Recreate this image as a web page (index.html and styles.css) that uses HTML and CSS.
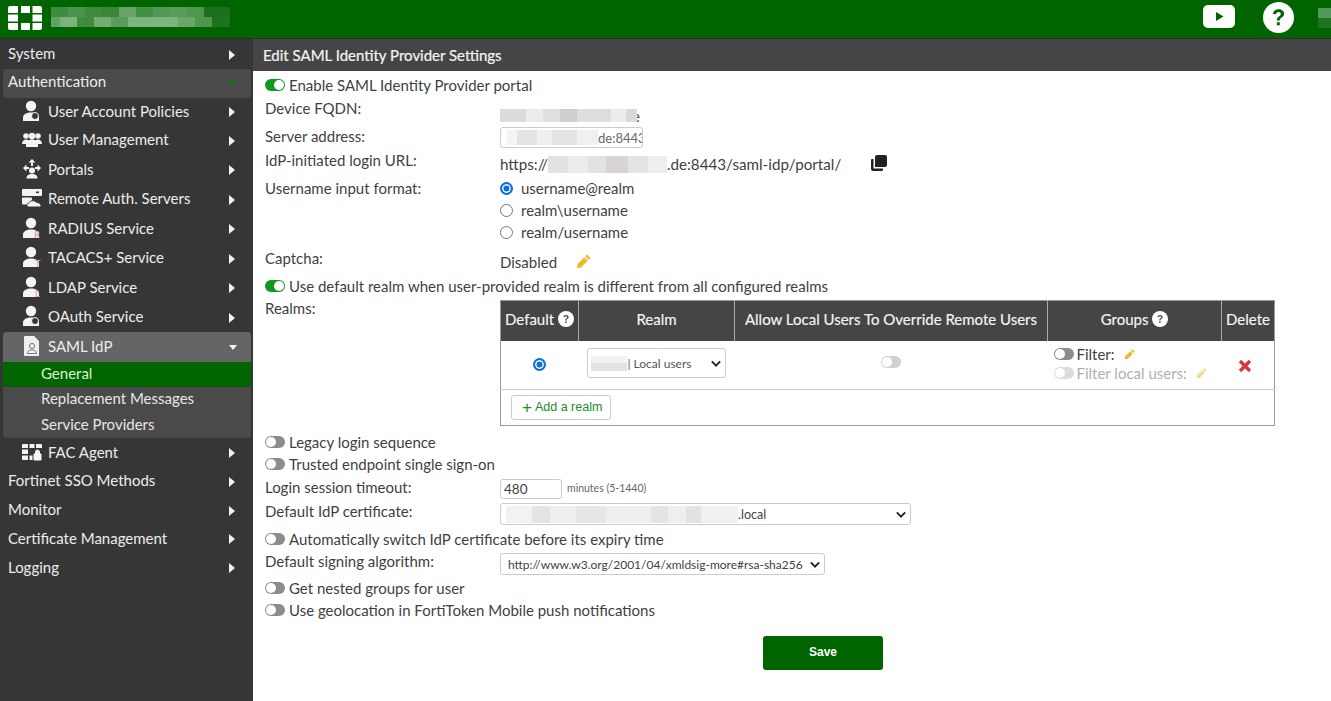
FILE: index.html
```html
<!DOCTYPE html>
<html lang="en">
<head>
<meta charset="utf-8">
<title>Edit SAML Identity Provider Settings</title>
<link rel="stylesheet" href="styles.css">
</head>
<body>
<svg class="defs" width="0" height="0">
  <defs>
    <symbol id="person" viewBox="0 0 20 22">
      <circle cx="9" cy="6" r="5.2" fill="#f4f4f4"/>
      <path d="M1 21v-3.5C1 14 5 12.500 9 12.500s8 1.500 8 5V21z" fill="#f4f4f4"/>
    </symbol>
    <symbol id="chev" viewBox="0 0 6 10"><path d="M0 0l6 5-6 5z" fill="#f2f2f2"/></symbol>
    <symbol id="pencil" viewBox="0 0 16 16"><path d="M11 1.500l3.500 3.500-1.800 1.800-3.500-3.500zM8.300 4.200l3.500 3.500-6.800 6.800-4 .6.600-4z" fill="currentColor"/></symbol>
    <symbol id="help" viewBox="0 0 16 16"><circle cx="8" cy="8" r="8" fill="#fff"/><path d="M5.500 6.200C5.600 4.700 6.700 4 8 4c1.500 0 2.600.8 2.600 2.100 0 1-.6 1.500-1.300 2-.6.400-.8.700-.8 1.300H7.200c0-1 .3-1.500 1-2 .6-.4.900-.7.900-1.200 0-.5-.5-.9-1.100-.9-.7 0-1.100.4-1.200 1z" fill="#454545"/><rect x="7.100" y="10.400" width="1.500" height="1.500" fill="#454545"/></symbol>
  </defs>
</svg>

<header class="topbar">
  <svg class="logo" viewBox="0 0 34 24" width="34" height="24">
    <path fill="#fff" d="M2 0h8v7H0V2a2 2 0 0 1 2-2zM13 0h9v7h-9zM24.500 0H32a2 2 0 0 1 2 2v5h-9.500zM0 8.500h10v7H0zM24.500 8.500H34v7h-9.500zM0 17h10v7H2a2 2 0 0 1-2-2zM13 17h9v7h-9zM24.500 17H34v5a2 2 0 0 1-2 2h-7.500z"/>
  </svg>
  <svg class="mosaic-top" width="179" height="20" viewBox="0 0 179 20">
    <rect width="179" height="20" fill="#2a7a2a"/>
    <rect x="0" y="0" width="17" height="10" fill="#3e8a3e"/><rect x="17" y="0" width="17" height="10" fill="#4c944c"/><rect x="34" y="0" width="17" height="10" fill="#3d893d"/><rect x="51" y="0" width="17" height="10" fill="#3a873a"/><rect x="68" y="0" width="17" height="10" fill="#68a468"/><rect x="85" y="0" width="17" height="10" fill="#409040"/><rect x="102" y="0" width="17" height="10" fill="#52985a"/><rect x="119" y="0" width="17" height="10" fill="#589c58"/><rect x="136" y="0" width="17" height="10" fill="#4f964f"/><rect x="153" y="0" width="26" height="10" fill="#1c6f1c"/>
    <rect x="0" y="10" width="9" height="10" fill="#64a264"/><rect x="9" y="10" width="17" height="10" fill="#7cb27c"/><rect x="26" y="10" width="17" height="10" fill="#3f8c3f"/><rect x="43" y="10" width="17" height="10" fill="#74ac74"/><rect x="60" y="10" width="17" height="10" fill="#5a9c5a"/><rect x="77" y="10" width="50" height="10" fill="#7eb47e"/><rect x="127" y="10" width="17" height="10" fill="#6aa56a"/><rect x="144" y="10" width="17" height="10" fill="#4e964e"/><rect x="161" y="10" width="18" height="10" fill="#1f721f"/>
  </svg>
  <div class="topbar-right">
    <svg class="yt" viewBox="0 0 32 23" width="32" height="23"><rect width="32" height="23" rx="5" fill="#fff"/><path d="M13 7l7.500 4.500L13 16z" fill="#006400"/></svg>
    <svg class="help-top" viewBox="0 0 31 31" width="31" height="31"><circle cx="15.500" cy="15.500" r="15.500" fill="#fff"/><path d="M10 12c.2-3.200 2.500-4.700 5.600-4.700 3.200 0 5.500 1.700 5.500 4.500 0 2-1.200 3-2.700 4-1.200.8-1.600 1.400-1.600 2.600h-3c0-2 .7-3 2.100-4 1.200-.8 1.900-1.400 1.900-2.500 0-1.100-.9-1.900-2.200-1.900-1.400 0-2.300.8-2.500 2.200z" fill="#006400"/><rect x="13.800" y="20.300" width="3" height="3" fill="#006400"/></svg>
    <div class="mosaic-user"></div>
  </div>
</header>

<div class="main">
  <nav class="sidebar">
    <a class="nav top h29">System<svg class="arrow"><use href="#chev"/></svg></a>
    <a class="nav top open h28">Authentication<span class="down green"></span></a>

    <a class="nav sub h29">
      <svg class="ic"><use href="#person"/><circle cx="13" cy="16" r="3.500" fill="#363636" stroke="#f4f4f4"/></svg>User Account Policies<svg class="arrow"><use href="#chev"/></svg></a>
    <a class="nav sub h28">
      <svg class="ic" viewBox="0 0 20 22"><circle cx="4" cy="8" r="2.800" fill="#f4f4f4"/><circle cx="16" cy="8" r="2.800" fill="#f4f4f4"/><circle cx="10" cy="8" r="3.200" fill="#f4f4f4"/><path d="M0 16c0-3 2-4.500 4-4.500s3 .8 3 2V16zM13 16v-2.500c0-1.200 1-2 3-2s4 1.500 4 4.500z" fill="#f4f4f4"/><path d="M4 19v-3c0-3 3-4.500 6-4.500s6 1.500 6 4.500v3z" fill="#f4f4f4"/></svg>User Management<svg class="arrow"><use href="#chev"/></svg></a>
    <a class="nav sub h30">
      <svg class="ic" viewBox="0 0 20 22"><path d="M10 1l3.500 3.500H11V8H9V4.500H6.500zM1 10l3.500-3.500V9H7v2H4.500v2.500zM19 10l-3.500-3.500V9H13v2h2.500v2.500z" fill="#f4f4f4"/><circle cx="10" cy="12.500" r="3" fill="#f4f4f4"/><path d="M4.500 20.500c0-3.500 2.500-4.500 5.500-4.500s5.500 1 5.500 4.500z" fill="#f4f4f4"/></svg>Portals<svg class="arrow"><use href="#chev"/></svg></a>
    <a class="nav sub h29">
      <svg class="ic wide" viewBox="0 0 21 22"><rect x="0" y="2" width="20" height="7" rx="1" fill="#f4f4f4"/><rect x="0" y="10.500" width="10" height="7" rx="1" fill="#f4f4f4"/><rect x="14" y="4.500" width="3" height="1.600" fill="#363636"/><path d="M7 20c-2.500 0-3-3 -.5-3.500C7.500 13.500 12 12.500 14.500 15.500c3.500-.5 6.500 4.500 3 4.500z" fill="#f4f4f4" stroke="#363636"/></svg>Remote Auth. Servers<svg class="arrow"><use href="#chev"/></svg></a>
    <a class="nav sub h30">
      <svg class="ic"><use href="#person"/><text x="12" y="21" class="ic-letter">R</text></svg>RADIUS Service<svg class="arrow"><use href="#chev"/></svg></a>
    <a class="nav sub h29">
      <svg class="ic"><use href="#person"/><text x="13" y="21" class="ic-letter">T</text></svg>TACACS+ Service<svg class="arrow"><use href="#chev"/></svg></a>
    <a class="nav sub h30">
      <svg class="ic"><use href="#person"/><text x="13" y="21" class="ic-letter">L</text></svg>LDAP Service<svg class="arrow"><use href="#chev"/></svg></a>
    <a class="nav sub h29">
      <svg class="ic"><use href="#person"/><circle cx="13" cy="16" r="3.500" fill="#363636" stroke="#f4f4f4"/></svg>OAuth Service<svg class="arrow"><use href="#chev"/></svg></a>

    <div class="group">
      <a class="nav sub group-head">
        <svg class="ic" viewBox="0 0 20 22"><path d="M3 1h9l5 5v15H3a1 1 0 0 1-1-1V2a1 1 0 0 1 1-1z" fill="#f0f0f0"/><circle cx="10" cy="11" r="2.600" fill="none" stroke="#777"/><path d="M5.500 18.500c0-2.500 1.800-3.500 4.500-3.500s4.500 1 4.500 3.500z" fill="none" stroke="#777"/></svg>SAML IdP<span class="down"></span></a>
      <a class="leaf active">General</a>
      <a class="leaf">Replacement Messages</a>
      <a class="leaf">Service Providers</a>
    </div>

    <a class="nav sub h28 fac">
      <svg class="ic wide" viewBox="0 0 21 22"><path d="M1 3h5v4H0V4a1 1 0 0 1 1-1zM7.500 3h5v4h-5zM14 3h5a1 1 0 0 1 1 1v3h-6zM0 8.500h6v4.500H0zM0 14.500h6V19H1a1 1 0 0 1-1-1zM7.500 14.500h3V19h-3z" fill="#f4f4f4"/><path d="M12 13h7v6h-7zM13.500 13v-2a2 2 0 0 1 4 0v2" fill="#f4f4f4" stroke="#f4f4f4"/></svg>FAC Agent<svg class="arrow"><use href="#chev"/></svg></a>
    <a class="nav top h28">Fortinet SSO Methods<svg class="arrow"><use href="#chev"/></svg></a>
    <a class="nav top h29">Monitor<svg class="arrow"><use href="#chev"/></svg></a>
    <a class="nav top h28">Certificate Management<svg class="arrow"><use href="#chev"/></svg></a>
    <a class="nav top h29">Logging<svg class="arrow"><use href="#chev"/></svg></a>
  </nav>

  <main class="content">
    <h1 class="title">Edit SAML Identity Provider Settings</h1>
    <div class="form">
      <div class="toggle-row r-enable"><span class="tg on"></span>Enable SAML Identity Provider portal</div>

      <div class="row r-fqdn"><label>Device FQDN:</label>
        <div class="val v-fqdn"><span class="blur b-fqdn"></span><span class="tail-e">e</span></div></div>
      <div class="row r-server"><label>Server address:</label>
        <div class="input in-server"><span class="blur b-server"></span><span>de:8443</span></div></div>
      <div class="row r-url"><label>IdP-initiated login URL:</label>
        <div class="val v-url">https://<span class="blur b-url"></span>.de:8443/saml-idp/portal/
          <svg class="copy" viewBox="0 0 16 16" width="16" height="16"><path d="M6 0h8a2 2 0 0 1 2 2v8a2 2 0 0 1-2 2H4V2a2 2 0 0 1 2-2z" fill="#222"/><path d="M2.500 4v9.500H12V15a1 1 0 0 1-1 1H2a2 2 0 0 1-2-2V5a1 1 0 0 1 1-1z" fill="#222"/></svg>
        </div></div>
      <div class="row r-format"><label>Username input format:</label>
        <div class="radios">
          <div class="radio-line"><span class="radio checked"></span>username@realm</div>
          <div class="radio-line"><span class="radio"></span>realm\username</div>
          <div class="radio-line"><span class="radio"></span>realm/username</div>
        </div></div>
      <div class="row r-captcha"><label>Captcha:</label>
        <div class="val v-cap">Disabled<svg class="pen big"><use href="#pencil"/></svg></div></div>
      <div class="toggle-row r-default"><span class="tg on"></span>Use default realm when user-provided realm is different from all configured realms</div>

      <div class="row r-realms"><label>Realms:</label>
        <table class="realms">
          <thead><tr>
            <th class="c1">Default <svg class="q"><use href="#help"/></svg></th>
            <th class="c2">Realm</th>
            <th class="c3">Allow Local Users To Override Remote Users</th>
            <th class="c4">Groups <svg class="q"><use href="#help"/></svg></th>
            <th class="c5">Delete</th>
          </tr></thead>
          <tbody>
            <tr class="data">
              <td class="center lift"><span class="radio checked"></span></td>
              <td class="center lift"><div class="select s-realm"><span class="blur b-realm"></span><span>| Local users</span><svg class="sel-chev" viewBox="0 0 12 8" width="10" height="7"><path d="M1 1.500l5 5 5-5" fill="none" stroke="#222" stroke-width="2.200"/></svg></div></td>
              <td class="center lift"><span class="tg off light"></span></td>
              <td class="groups">
                <div class="g-line"><span class="tg off"></span>Filter:<svg class="pen"><use href="#pencil"/></svg></div>
                <div class="g-line dim"><span class="tg off"></span>Filter local users:<svg class="pen"><use href="#pencil"/></svg></div>
              </td>
              <td class="center del"><svg class="x" viewBox="0 0 14 14" width="14" height="14"><path d="M3.200.800L7 4.600 10.800.800l2.400 2.400L9.400 7l3.800 3.800-2.400 2.400L7 9.400l-3.800 3.800-2.400-2.400L4.600 7 .800 3.200z" fill="#d9363e"/></svg></td>
            </tr>
            <tr class="add"><td colspan="5"><button class="btn-add" type="button"><span class="plus">+</span>Add a realm</button></td></tr>
          </tbody>
        </table></div>

      <div class="toggle-row r-legacy"><span class="tg off"></span>Legacy login sequence</div>
      <div class="toggle-row r-trusted"><span class="tg off"></span>Trusted endpoint single sign-on</div>
      <div class="row r-timeout"><label>Login session timeout:</label>
        <div class="input in-time"><span>480</span></div><span class="hint">minutes (5-1440)</span></div>
      <div class="row r-cert"><label>Default IdP certificate:</label>
        <div class="select s-cert"><span class="blur b-cert"></span><span>.local</span><svg class="sel-chev" viewBox="0 0 12 8" width="10" height="7"><path d="M1 1.500l5 5 5-5" fill="none" stroke="#222" stroke-width="2.200"/></svg></div></div>
      <div class="toggle-row r-auto"><span class="tg off"></span>Automatically switch IdP certificate before its expiry time</div>
      <div class="row r-algo"><label>Default signing algorithm:</label>
        <div class="select s-algo"><span>http://www.w3.org/2001/04/xmldsig-more#rsa-sha256</span><svg class="sel-chev" viewBox="0 0 12 8" width="10" height="7"><path d="M1 1.500l5 5 5-5" fill="none" stroke="#222" stroke-width="2.200"/></svg></div></div>
      <div class="toggle-row r-nested"><span class="tg off"></span>Get nested groups for user</div>
      <div class="toggle-row r-geo"><span class="tg off"></span>Use geolocation in FortiToken Mobile push notifications</div>
      <div class="actions"><button class="save" type="button">Save</button></div>
    </div>
  </main>
</div>
</body>
</html>
```
FILE: styles.css
```css
* { box-sizing: border-box; }
html, body { margin: 0; height: 100%; overflow: hidden; }
body { font-family: Lato, "Liberation Sans", sans-serif; font-size: 15px; color: #3f3f3f; background: #fff; }
.defs { position: absolute; }

.topbar { height: 39px; background: #006400; border-bottom: 1px solid #2e2e2e; display: flex; align-items: flex-start; padding: 6px 0 0 8px; }
.mosaic-top { margin: 1px 0 0 9px; }
.topbar-right { margin-left: auto; display: flex; align-items: flex-start; }
.yt { margin-top: -1px; }
.help-top { margin: -4px 0 0 28px; }
.mosaic-user { width: 13px; height: 20px; margin: 2px 0 0 24px; background: linear-gradient(#52985a 50%, #1f721f 50%); }

.main { display: flex; height: 662px; }
.sidebar { width: 253px; flex: none; background: #363636; padding: 1px 0 0; color: #f0f0f0; }
.nav { display: flex; align-items: center; position: relative; color: #ededed; font-size: 15px; padding-right: 18px; padding-bottom: 3px; }
.nav .arrow { width: 6px; height: 10px; margin-left: auto; margin-top: 3px; }
.top { padding-left: 8px; }
.sub { padding-left: 22px; }
.h28 { height: 28.500px; }
.h29 { height: 29px; }
.h30 { height: 30px; }
.open { background: #4a4a4a; margin: 0 2px 0 3px; padding-left: 5px; padding-right: 16px; padding-bottom: 4px; border-radius: 3px; }
.ic { width: 20px; height: 22px; margin-right: 6px; flex: none; }
.ic.wide { width: 21px; margin-right: 5px; }
.ic-letter { font-size: 9px; fill: #d8a0c8; font-family: Lato, sans-serif; font-weight: 700; }
.down { width: 0; height: 0; margin-left: auto; margin-right: -2px; margin-top: 3px; border-left: 4.500px solid transparent; border-right: 4.500px solid transparent; border-top: 5px solid #f2f2f2; }
.down.green { border-top-color: #0b7a0b; }

.group { background: #4a4a4a; margin: 0 2px 0 3px; border-radius: 4px; height: 106px; overflow: hidden; }
.group-head { height: 30px; background: #656565; padding-left: 19px; padding-right: 16px; }
.leaf { display: flex; align-items: center; height: 25.500px; padding: 0 0 3px 38px; color: #e6e6e6; font-size: 15px; }
.leaf.active { background: #006400; color: #d8f5c8; height: 25px; padding-bottom: 4px; }
.fac { margin-top: 1px; }

.content { flex: 1; min-width: 0; }
.title { margin: 0; height: 32px; background: #454545; color: #f5f5f5; font-size: 15px; font-weight: 400; padding: 0 0 0 10px; line-height: 33px; -webkit-text-stroke: .2px #f5f5f5; }
.form { padding: 0 0 0 12px; }

.tg { display: inline-block; width: 20px; height: 12px; border-radius: 6px; background: #8c8c8c; position: relative; flex: none; }
.tg::after { content: ""; position: absolute; left: 1px; top: 1px; width: 10px; height: 10px; border-radius: 50%; background: #fff; }
.tg.on { background: #0f9a1f; }
.tg.on::after { left: 9px; }
.tg.light { background: #d0d0d0; }
.toggle-row { display: flex; align-items: center; gap: 4px; height: 22.500px; }

.row { display: flex; align-items: flex-start; }
.row > label { width: 235px; flex: none; padding-top: 2px; }
.val { display: flex; align-items: center; white-space: nowrap; }
.blur { display: block; }
.r-enable { margin-top: 3px; }
.r-fqdn { height: 28.500px; }
.v-fqdn { padding-top: 10px; }
.b-fqdn { width: 137px; height: 13px; position: relative; z-index: 1; background: linear-gradient(90deg, #dcdcdc 0 26px, #ececec 26px 43px, #e0e0e0 43px 60px, #cfcfcf 60px 77px, #dedede 77px 111px, #ececec 111px 126px, #dcd8d8 126px); }
.tail-e { margin-left: -5px; }
.r-server { height: 24px; }
.input { display: flex; align-items: center; height: 20px; border: 1px solid #ccc; border-radius: 3px; background: #fff; overflow: hidden; }
.in-server { width: 143px; height: 21px; margin-top: 2px; padding: 0 0 0 6px; font-size: 13px; color: #666; white-space: nowrap; }
.b-server { width: 91px; height: 15px; flex: none; background: linear-gradient(90deg, #f4f4f4 0 10px, #e4e4e4 10px 30px, #efefef 30px 45px, #e4e4e4 45px 70px, #f0f0f0 70px 91px); }
.r-url { height: 28px; }
.v-url { padding-top: 6px; font-size: 15.200px; }
.b-url { width: 119px; height: 17px; background: linear-gradient(90deg, #e2e2e2 0 20px, #ececec 20px 40px, #e2e2e2 40px 58px, #d8d4d4 58px 80px, #e4e4e4 80px 100px, #eeeeee 100px); }
.copy { margin-left: 30px; margin-top: -2px; }
.r-format { height: 70px; }
.radios { display: flex; flex-direction: column; }
.radio-line { display: flex; align-items: center; height: 22px; gap: 8px; }
.radio { display: inline-block; width: 13px; height: 13px; border-radius: 50%; border: 1px solid #767676; background: #fff; flex: none; }
.radio.checked { border: 2px solid #0a6fe0; box-shadow: inset 0 0 0 1.500px #fff; background: #0a6fe0; }
.r-captcha { height: 27px; }
.v-cap { padding-top: 6px; }
.pen { width: 12px; height: 12px; color: #eeb92e; margin-left: 9px; }
.pen.big { width: 16px; height: 16px; margin-left: 19px; margin-top: -2px; }
.r-default { height: 23px; }
.r-realms { height: 134px; }

.realms { width: 774px; border-collapse: collapse; table-layout: fixed; border: 1px solid #999; margin-top: 3px; }
.realms th { background: #454545; color: #f5f5f5; font-weight: 400; font-size: 15px; height: 40px; padding: 0 0 3px; border-left: 1px solid #aaa; text-align: center; white-space: nowrap; -webkit-text-stroke: .15px #f5f5f5; }
.realms th:first-child { border-left: 0; }
.c1 { width: 78px; } .c2 { width: 156px; } .c3 { width: 313px; } .c4 { width: 174px; } .c5 { width: 53px; }
.q { width: 16px; height: 16px; vertical-align: -2px; }
.data td { height: 49px; border-bottom: 1px solid #ccc; padding: 0; }
.data .lift { padding-bottom: 3px; }
.center { text-align: center; }
.data .radio { vertical-align: -2px; }
.data .tg { vertical-align: 1px; }
.data .del { padding-right: 5px; }
.select { display: flex; align-items: center; border: 1px solid #ccc; border-radius: 3px; background: #fff; position: relative; text-align: left; white-space: nowrap; }
.sel-chev { position: absolute; right: 4px; top: 50%; margin-top: -3px; }
.s-realm { width: 139px; height: 30px; margin-left: 8px; padding-left: 3px; font-size: 12px; color: #555; }
.b-realm { width: 36px; height: 15px; margin-right: 1px; background: linear-gradient(180deg, #f2f2f2 0 7px, #e2e2e2 7px); }
.data .groups { padding: 0 0 3px 6px; font-size: 15px; }
.g-line { display: flex; align-items: center; gap: 3px; height: 19px; }
.g-line .pen { margin-left: 6px; }
.dim { color: #b0b0b0; }
.dim .tg { background: #dcdcdc; }
.dim .pen { color: #f2dc90; }
.x { vertical-align: -2px; }
.add td { height: 36px; padding: 0 0 1px 10px; }
.btn-add { display: flex; align-items: center; height: 25px; width: 100px; border: 1px solid #ccc; border-radius: 3px; background: #fff; font: 12.500px "Liberation Sans", Arial, sans-serif; color: #1d8a30; padding: 0 0 0 10px; }
.plus { font-size: 17px; margin-right: 3px; line-height: 1; }

.r-legacy { height: 22px; }
.r-timeout { height: 24.500px; }
.in-time { width: 62px; height: 20px; margin-top: 3px; padding-left: 3px; font-size: 13.500px; }
.hint { font-size: 10.500px; color: #666; margin: 6px 0 0 5px; }
.r-cert { height: 29px; }
.s-cert { width: 411px; height: 22px; margin-top: 3px; padding-left: 5px; font-size: 12.500px; }
.b-cert { width: 232px; height: 17px; background: linear-gradient(90deg, #f2f2f2 0 26px, #e4e4e4 26px 44px, #efefef 44px 70px, #e6e6e6 70px 100px, #eeeeee 100px 145px, #e4e4e4 145px 162px, #eeeeee 162px 180px, #e2e2e2 180px 195px, #f0f0f0 195px 232px); }
.r-auto { height: 19px; }
.r-algo { height: 30px; }
.r-algo label { padding-top: 4px; }
.s-algo { width: 325px; height: 22px; margin-top: 5px; padding-left: 7px; font-size: 12px; }
.r-nested { height: 19px; }
.r-geo { height: 26px; }
.actions { width: 1116px; display: flex; justify-content: center; padding: 13px 0 0; }
.save { width: 120px; height: 34px; background: #006400; color: #fff; border: 0; border-radius: 3px; font: 700 12px "Liberation Sans", Arial, sans-serif; padding-bottom: 3px; }
```
